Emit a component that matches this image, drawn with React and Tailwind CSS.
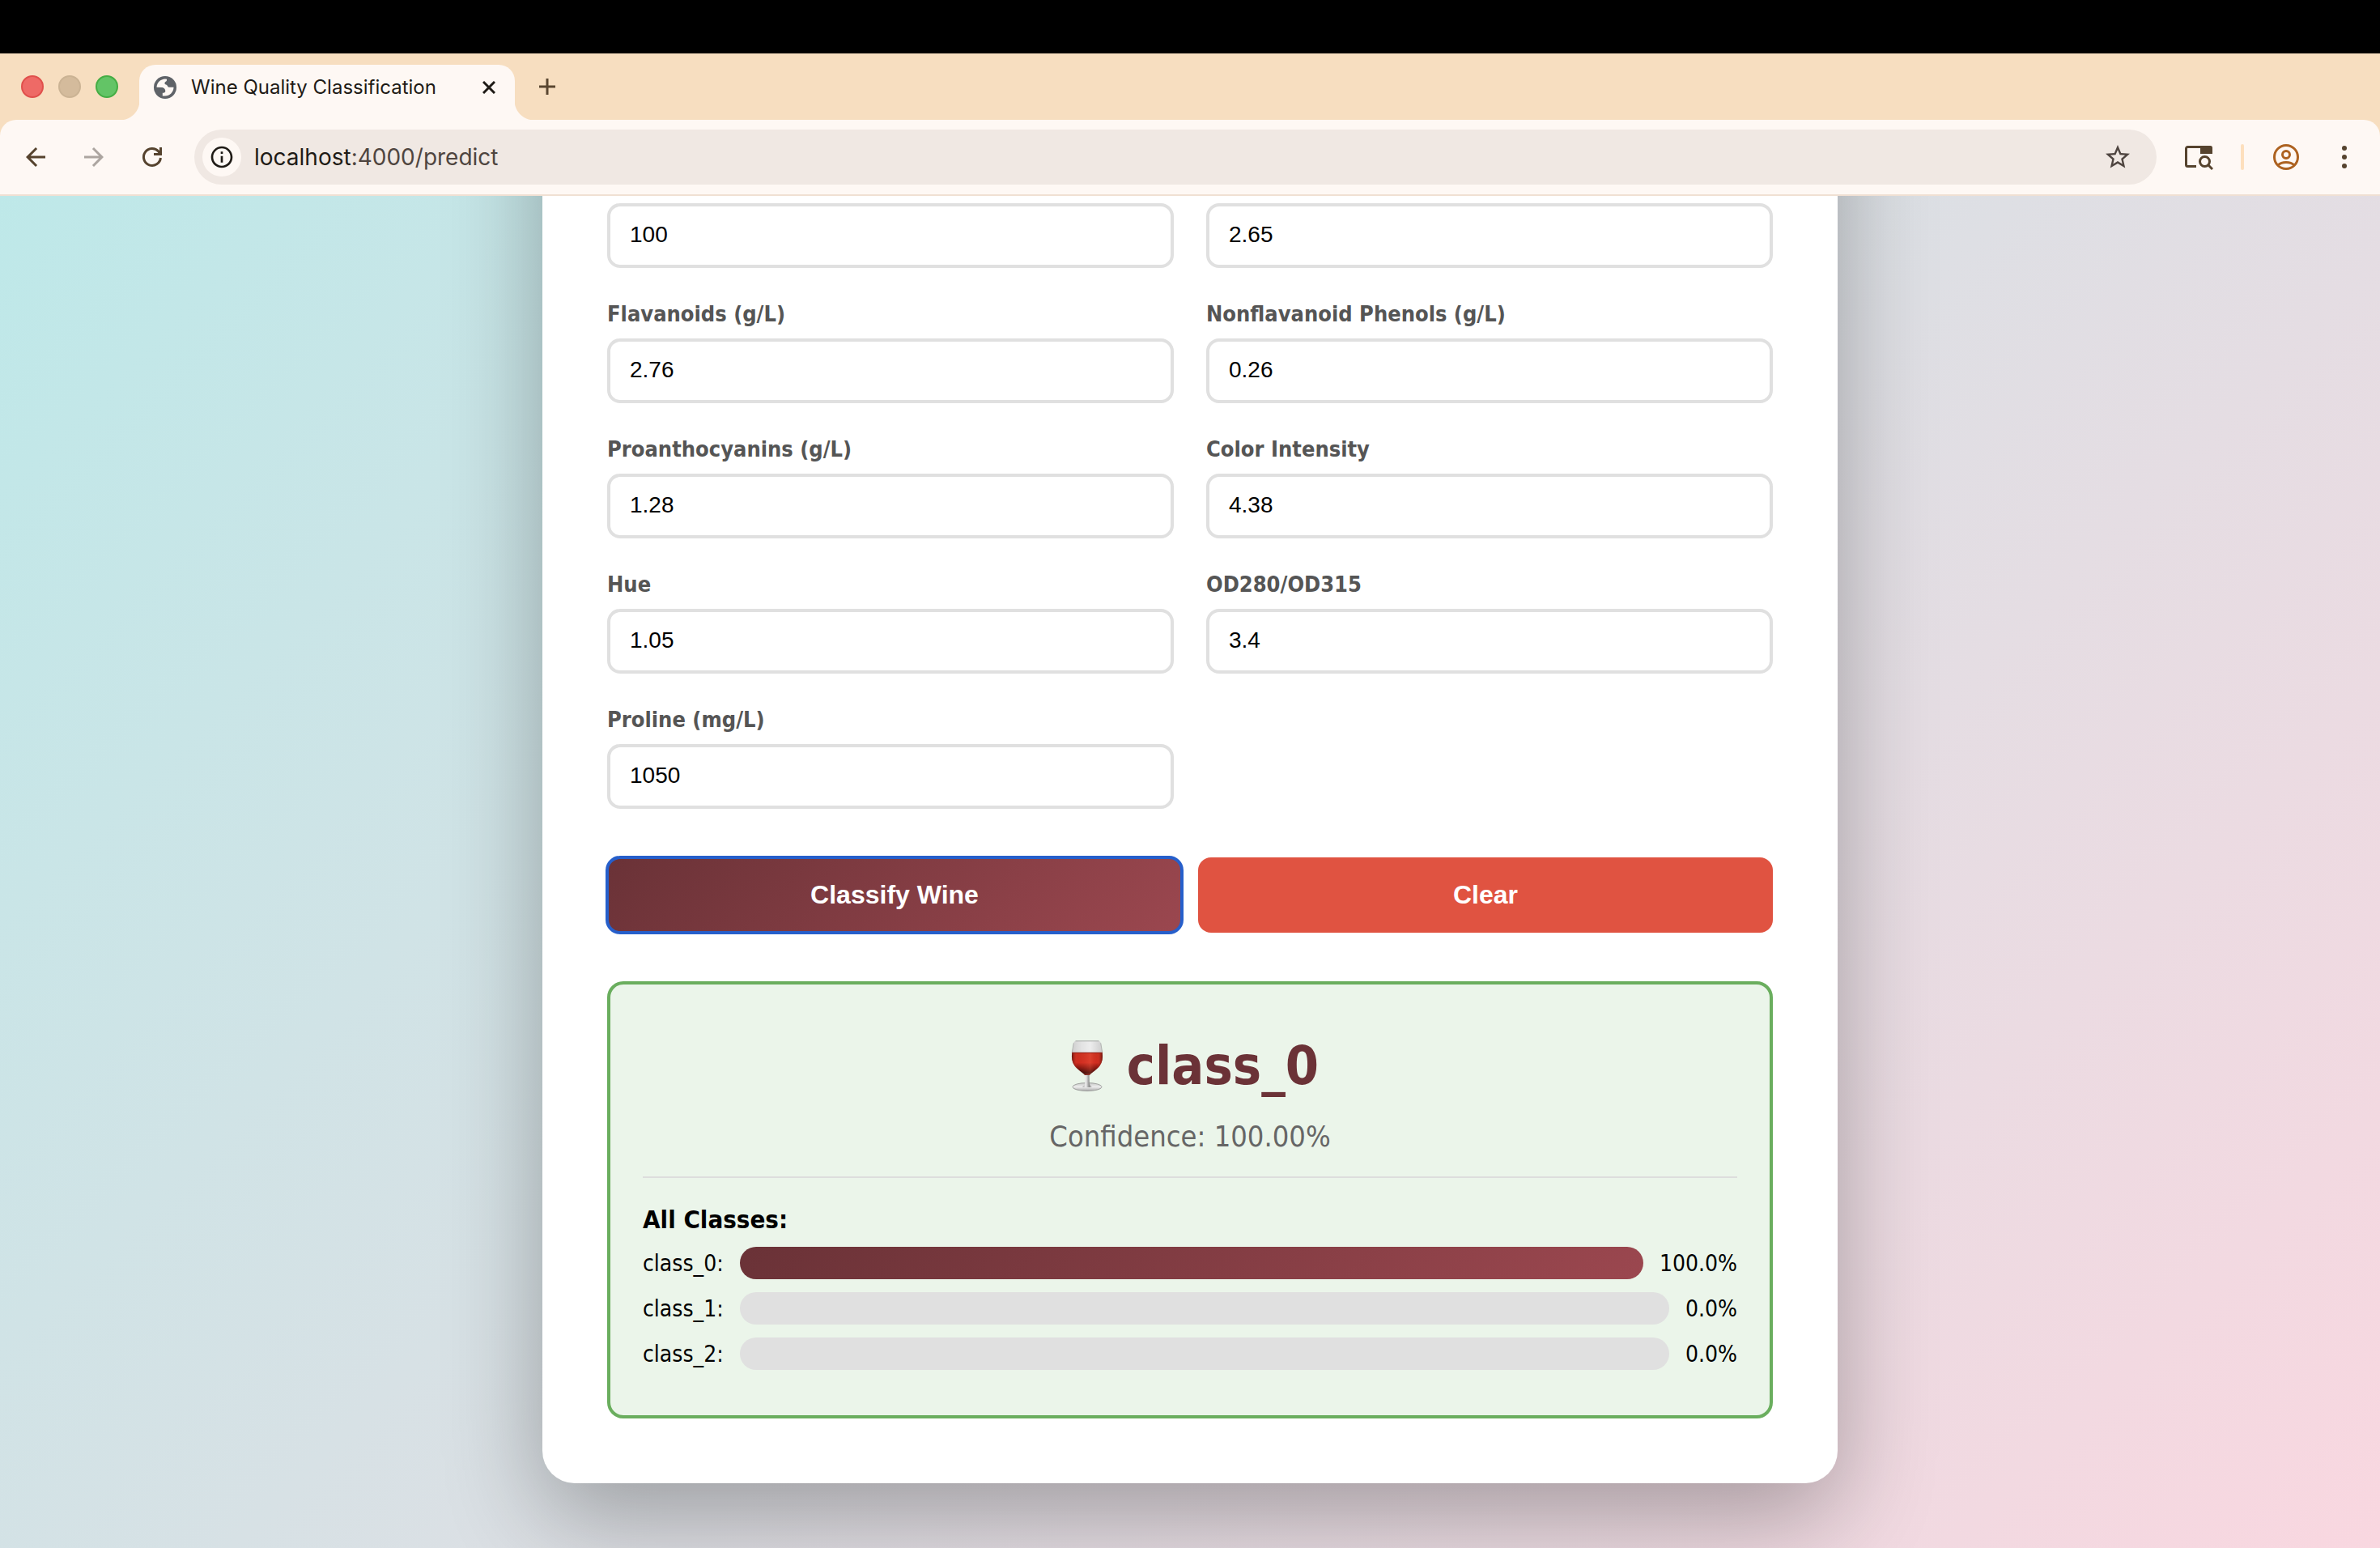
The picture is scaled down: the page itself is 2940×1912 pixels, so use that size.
import React from 'react';
import { MdArrowBack, MdArrowForward, MdInfoOutline, MdStarBorder } from 'react-icons/md';

const fields = [
  { id: 'magnesium', name: 'Magnesium (mg/L)', value: '100', labelAbove: false },
  { id: 'phenols', name: 'Total Phenols (g/L)', value: '2.65', labelAbove: false },
  { id: 'flavanoids', name: 'Flavanoids (g/L)', value: '2.76', labelAbove: true },
  { id: 'nonflavanoids', name: 'Nonflavanoid Phenols (g/L)', value: '0.26', labelAbove: true },
  { id: 'proanthocyanins', name: 'Proanthocyanins (g/L)', value: '1.28', labelAbove: true },
  { id: 'color', name: 'Color Intensity', value: '4.38', labelAbove: true },
  { id: 'hue', name: 'Hue', value: '1.05', labelAbove: true },
  { id: 'od', name: 'OD280/OD315', value: '3.4', labelAbove: true },
  { id: 'proline', name: 'Proline (mg/L)', value: '1050', labelAbove: true },
];

const classes = [
  { name: 'class_0', percent: 100 },
  { name: 'class_1', percent: 0 },
  { name: 'class_2', percent: 0 },
];

function GlobeIcon() {
  return (
    <svg viewBox="0 0 28 28" className="size-7 shrink-0" aria-hidden="true">
      <circle cx="14" cy="14" r="14" fill="#5f6368" />
      <path
        d="M3.5 13.8C3.8 8 8.3 3.7 14 3.5l2 .2V5c0 2-2.2 1.5-2.5 3.5-.3 2 1.5 1.8 2.5 2.5 1.5 1.3 1 2.8 3.5 2.8h5C24.5 20 19.5 24.5 14 24.5h-3.2v-3.7c2.2 0 3.5-.8 3.5-2.3 0-2.5-1.8-4.2-3.8-4.5z"
        fill="#fef8f4"
      />
    </svg>
  );
}

function ReloadIcon() {
  return (
    <svg viewBox="0 0 36 36" className="size-9" fill="none" aria-hidden="true">
      <path d="M28.4 19a10.5 10.5 0 1 1-2.6-8l2.2 2.5" stroke="currentColor" strokeWidth="3" />
      <path d="M27 6h3v10H20v-3h4.5L27 12z" fill="currentColor" />
    </svg>
  );
}

function SidePanelSearchIcon() {
  return (
    <svg viewBox="0 0 36 36" className="size-9" fill="none" aria-hidden="true">
      <path d="M15 29.5H4.5a2 2 0 0 1-2-2v-20a2 2 0 0 1 2-2h28" stroke="currentColor" strokeWidth="3" />
      <path d="M20 4h12.5a2.500 2.500 0 0 1 2.500 2.500V14H20z" fill="currentColor" />
      <circle cx="25.5" cy="23.5" r="6" stroke="currentColor" strokeWidth="3" />
      <path d="M29.8 27.8l5.2 5.2" stroke="currentColor" strokeWidth="3" />
    </svg>
  );
}

function ProfileIcon() {
  return (
    <svg viewBox="0 0 36 36" className="size-9" fill="none" stroke="currentColor" strokeWidth="3" aria-hidden="true">
      <circle cx="18" cy="18" r="14.5" />
      <circle cx="18" cy="15" r="4.5" />
      <path d="M8 28c2.5-2.5 6-3.5 10-3.5s7.5 1 10 3.5" />
    </svg>
  );
}

function DotsIcon() {
  return (
    <svg viewBox="0 0 36 36" className="size-9" fill="currentColor" aria-hidden="true">
      <circle cx="18" cy="7" r="3" />
      <circle cx="18" cy="18" r="3" />
      <circle cx="18" cy="29" r="3" />
    </svg>
  );
}

function WineGlassIcon() {
  return (
    <svg viewBox="0 0 66 80" className="h-20 w-[66px]" aria-hidden="true">
      <defs>
        <linearGradient id="glassTop" x1="0" x2="1" y1="0" y2="0">
          <stop offset="0" stopColor="#cfcfcf" />
          <stop offset="0.3" stopColor="#e2e2e2" />
          <stop offset="0.6" stopColor="#ededed" />
          <stop offset="1" stopColor="#cdcdcd" />
        </linearGradient>
        <linearGradient id="wineFill" x1="0" x2="0" y1="0" y2="1">
          <stop offset="0" stopColor="#c9301f" />
          <stop offset="0.45" stopColor="#cf2c1f" />
          <stop offset="0.7" stopColor="#7d140e" />
          <stop offset="0.9" stopColor="#2c0605" />
          <stop offset="1" stopColor="#7a2a26" />
        </linearGradient>
        <linearGradient id="wineEdge" x1="0" x2="1" y1="0" y2="0">
          <stop offset="0" stopColor="#3a0705" stopOpacity="0.7" />
          <stop offset="0.18" stopColor="#e0402f" stopOpacity="0" />
          <stop offset="0.6" stopColor="#ff6a50" stopOpacity="0.3" />
          <stop offset="0.82" stopColor="#e0402f" stopOpacity="0" />
          <stop offset="1" stopColor="#3a0705" stopOpacity="0.7" />
        </linearGradient>
        <linearGradient id="stemFill" x1="0" x2="1" y1="0" y2="0">
          <stop offset="0" stopColor="#9a9a9a" />
          <stop offset="0.35" stopColor="#f2f2f2" />
          <stop offset="0.7" stopColor="#8e8e8e" />
          <stop offset="1" stopColor="#c4c4c4" />
        </linearGradient>
        <linearGradient id="baseFill" x1="0" x2="0" y1="0" y2="1">
          <stop offset="0" stopColor="#c9cac9" />
          <stop offset="0.5" stopColor="#ececec" />
          <stop offset="1" stopColor="#a9a9a9" />
        </linearGradient>
      </defs>
      <g transform="translate(-1 0)">
        <ellipse cx="33" cy="66.5" rx="18" ry="5" fill="url(#baseFill)" stroke="#8f918f" strokeWidth="0.8" />
        <path d="M30.500 49h5l.3 13c.2 2.500 1.700 3.500 3.200 4.200-3 1.200-9 1.200-12 0 1.500-.7 3-1.700 3.200-4.200z" fill="url(#stemFill)" />
        <path d="M18.500 10h29c1.500 0 1.900 1 2.200 2.300l2 11.700H14.300l2-11.700c.3-1.300.7-2.300 2.200-2.300z" fill="url(#glassTop)" />
        <path d="M18.500 9.800h29" stroke="#a5a7a5" strokeWidth="1" />
        <path d="M16.300 12.300l-2 11.700M49.700 12.300l2 11.700" stroke="#b0b2b0" strokeWidth="1" />
        <path d="M14.300 24h37.400c1 6.500 0 12-3.200 16.500C45 45.500 39 48 36 52h-6c-3-4-9-6.500-12.500-11.500-3.200-4.500-4.200-10-3.200-16.500z" fill="url(#wineFill)" />
        <path d="M14.300 24h37.400c1 6.500 0 12-3.200 16.500C45 45.500 39 48 36 52h-6c-3-4-9-6.500-12.500-11.500-3.200-4.500-4.200-10-3.200-16.500z" fill="url(#wineEdge)" />
        <path d="M14.400 24.300h37.200" stroke="#8f1d14" strokeWidth="1" />
      </g>
    </svg>
  );
}

function TabStrip() {
  return (
    <div className="flex h-[82px] items-center bg-[#f7dec0] pl-[26px]">
      <div className="flex gap-[18px]">
        <button type="button" aria-label="Close window" className="size-7 rounded-full border-2 border-[#e0504c] bg-[#ee6a66]" />
        <button type="button" aria-label="Minimize window" className="size-7 rounded-full border-2 border-[#cbb394] bg-[#d4bb9c]" />
        <button type="button" aria-label="Zoom window" className="size-7 rounded-full border-2 border-[#45ad44] bg-[#63c466]" />
      </div>
      <div className="relative ml-[26px] flex h-[68px] w-[464px] items-center self-end rounded-t-[20px] bg-[#fef8f4] pb-3 pr-5 pl-[18px]">
        <span className="absolute right-full bottom-0 size-6 bg-[radial-gradient(circle_at_0_0,transparent_24px,#fef8f4_25px)]" />
        <span className="absolute bottom-0 left-full size-6 bg-[radial-gradient(circle_at_100%_0,transparent_24px,#fef8f4_25px)]" />
        <GlobeIcon />
        <span className="ml-[18px] flex-1 text-2xl whitespace-nowrap text-[#1f1b16]">Wine Quality Classification</span>
        <button type="button" aria-label="Close tab" className="flex size-6 items-center justify-center text-[#1f1b16]">
          <svg viewBox="0 0 16 16" className="size-4" stroke="currentColor" strokeWidth="3" aria-hidden="true">
            <path d="M1 1l14 14M15 1L1 15" />
          </svg>
        </button>
      </div>
      <button type="button" aria-label="New tab" className="ml-[30px] text-[#5a4630]">
        <svg viewBox="0 0 20 20" className="size-5" stroke="currentColor" strokeWidth="3" aria-hidden="true">
          <path d="M10 0v20M0 10h20" />
        </svg>
      </button>
    </div>
  );
}

function Toolbar() {
  return (
    <div className="bg-[#f7dec0]">
      <div className="flex items-center gap-[34px] rounded-t-[20px] border-b-2 border-[#f0e0d3] bg-[#fef8f4] py-3 pr-6 pl-[26px] text-[#56432e]">
        <div className="flex gap-9">
          <button type="button" aria-label="Back"><MdArrowBack className="size-9" /></button>
          <button type="button" aria-label="Forward" className="text-[#aca5a0]"><MdArrowForward className="size-9" /></button>
          <button type="button" aria-label="Reload"><ReloadIcon /></button>
        </div>
        <div className="flex h-[68px] flex-1 items-center rounded-full bg-[#f0e8e3] pr-[30px] pl-[10px]">
          <button type="button" aria-label="Site information" className="flex size-12 items-center justify-center rounded-full bg-[#fef8f4] text-[#1f1b16]">
            <MdInfoOutline className="size-8" />
          </button>
          <a href="#predict" className="ml-4 flex-1 text-[28px] text-[#4f4540]">
            <span className="text-[#1f1b16]">localhost</span>:4000/predict
          </a>
          <button type="button" aria-label="Bookmark this page" className="text-[#4f4540]"><MdStarBorder className="size-9" /></button>
        </div>
        <button type="button" aria-label="Search side panel"><SidePanelSearchIcon /></button>
        <span className="h-8 w-1 rounded-full bg-[#fddfbd]" />
        <button type="button" aria-label="Profile" className="text-[#ad6220]"><ProfileIcon /></button>
        <button type="button" aria-label="Browser menu" className="flex w-10 justify-center"><DotsIcon /></button>
      </div>
    </div>
  );
}

function Field({ field }) {
  return (
    <div>
      {field.labelAbove && (
        <label htmlFor={field.id} className="mb-[13px] block text-[27px] leading-[34px] font-bold text-[#555]">
          {field.name}
        </label>
      )}
      <input
        id={field.id}
        type="text"
        aria-label={field.labelAbove ? undefined : field.name}
        defaultValue={field.value}
        className="h-20 w-full rounded-2xl border-4 border-[#e0e0e0] bg-white px-6 pb-0.5 font-['Liberation_Sans',Arial,sans-serif] text-[28px] text-black"
      />
    </div>
  );
}

function Result() {
  return (
    <section className="mt-15 rounded-[20px] border-4 border-[#6aae5e] bg-[#ebf5ea] p-10 text-black">
      <h2 className="flex h-30 items-center justify-center gap-[15px] text-[66px] leading-none font-bold text-[#6b3237]">
        <WineGlassIcon />
        <span className="pt-0.5">class_0</span>
      </h2>
      <p className="pb-[21px] text-center text-4xl leading-14 text-[#666]">Confidence: 100.00%</p>
      <div className="border-t-2 border-[#ddd] pt-[30px]">
        <h3 className="mb-[13px] text-[31px] leading-[42px] font-bold">All Classes:</h3>
        {classes.map((c) => (
          <div key={c.name} className="mb-4 flex h-10 items-center gap-5 text-[28px]">
            <span className="pt-0.5">{c.name}:</span>
            <div className="h-full flex-1 overflow-hidden rounded-[20px] bg-[#e0e0e0]">
              <div
                className="h-full bg-[linear-gradient(135deg,#6a3237,#9b474f)]"
                style={{ width: `${c.percent}%` }}
              />
            </div>
            <span className="pt-0.5">{c.percent.toFixed(1)}%</span>
          </div>
        ))}
      </div>
    </section>
  );
}

export default function App() {
  return (
    <div className="flex min-h-screen flex-col">
      <header className="font-[Inter,sans-serif]">
        <div className="h-[66px] bg-black" />
        <TabStrip />
        <Toolbar />
      </header>
      <main className="flex-1 overflow-hidden bg-[linear-gradient(135deg,#b5ebea,#f9d7e0)] bg-[length:100%_2372px] bg-bottom pb-20 font-['DejaVu_Sans_Condensed','DejaVu_Sans',sans-serif]">
        <div className="mx-auto -mt-50 max-w-[1600px] rounded-[40px] bg-white px-20 pt-[209px] pb-20 shadow-[0_40px_120px_rgba(0,0,0,0.3)]">
          <form onSubmit={(e) => e.preventDefault()}>
            <div className="grid grid-cols-2 gap-10">
              {fields.map((f) => (
                <Field key={f.id} field={f} />
              ))}
            </div>
            <div className="mt-15 grid grid-cols-2 gap-5 font-['Liberation_Sans',Arial,sans-serif] text-[32px] font-bold text-white">
              <button
                type="submit"
                className="h-[93px] rounded-2xl bg-[linear-gradient(135deg,#6a3237,#9b474f)] pb-0.5 outline-4 -outline-offset-2 outline-[#265fcb]"
              >
                Classify Wine
              </button>
              <button type="reset" className="h-[93px] rounded-2xl bg-[#e05341] pb-0.5">
                Clear
              </button>
            </div>
          </form>
          <Result />
        </div>
      </main>
    </div>
  );
}
